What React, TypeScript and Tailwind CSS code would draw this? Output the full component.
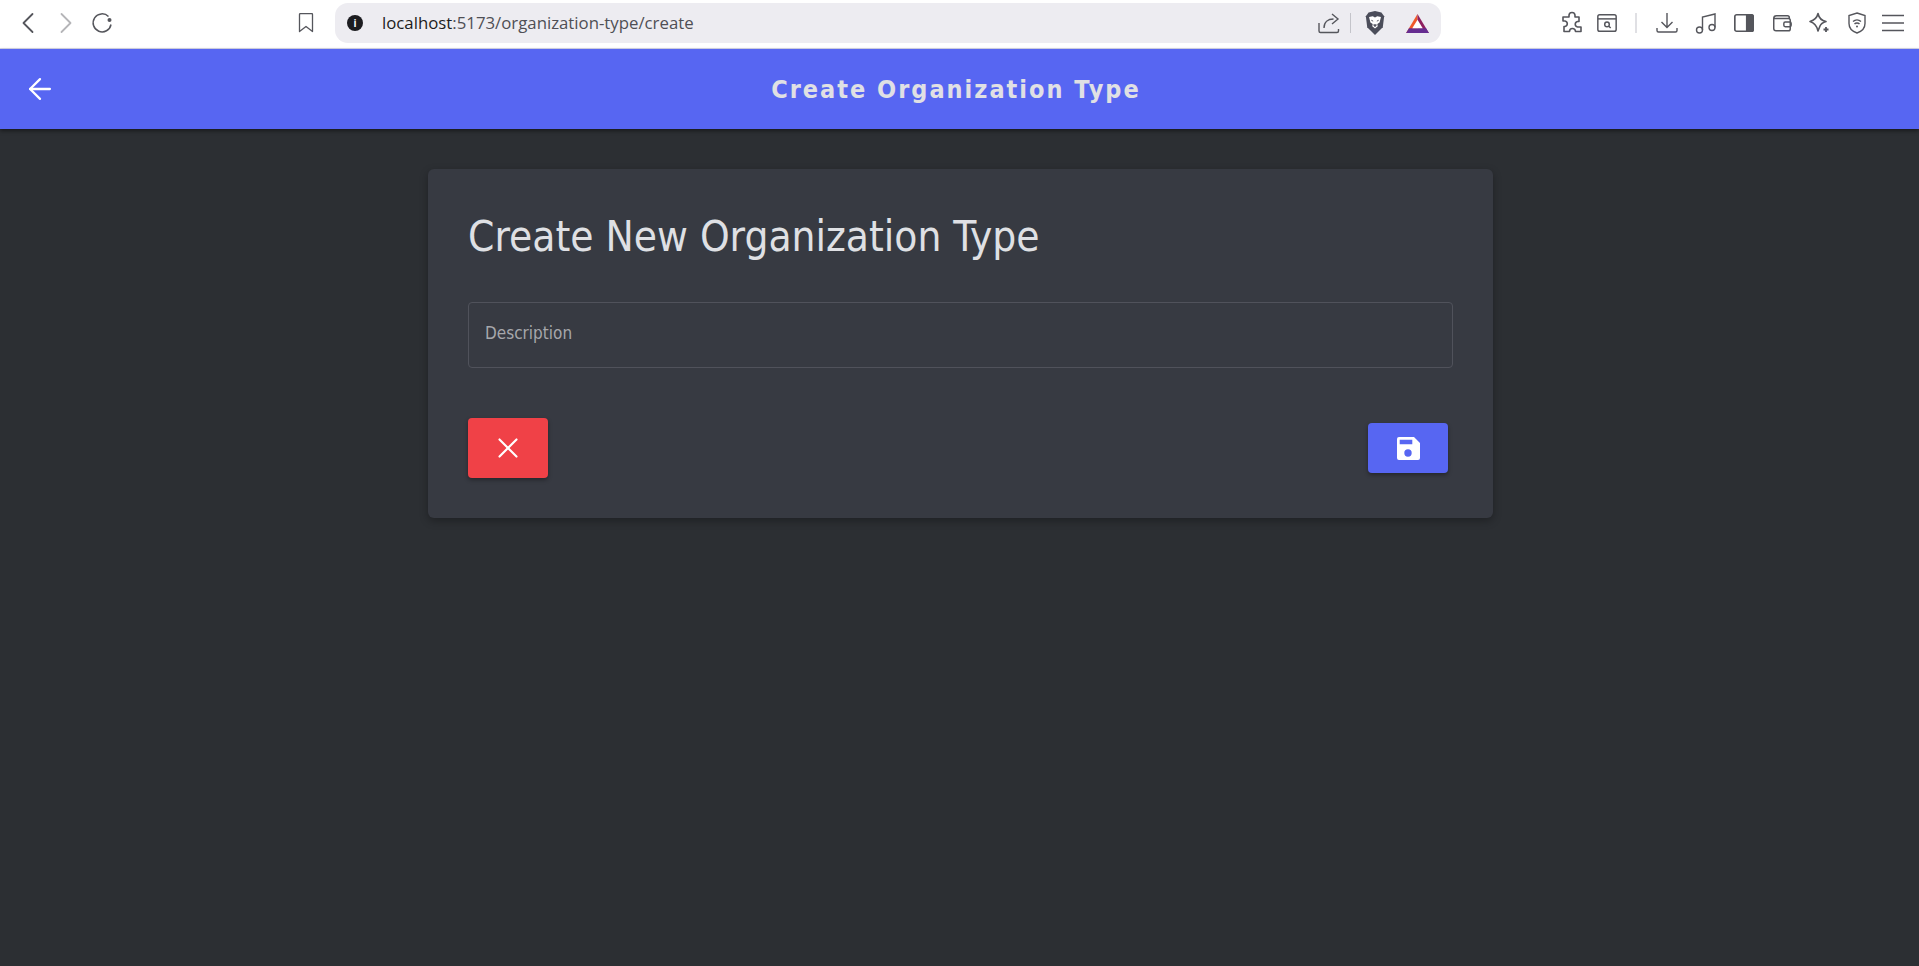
import { X, ChevronLeft, ChevronRight, ArrowLeft } from "lucide-react";

function ChromeBar() {
  return (
    <div className="h-[49px] pb-[2px] bg-white border-b border-[#d5d6e8] flex items-center font-['Open_Sans',sans-serif]">
      <div className="w-[335px] flex items-center shrink-0 text-[#55565c]">
        <ChevronLeft className="w-[36px] h-[36px] ml-[10px]" strokeWidth={1.2} />
        <ChevronRight className="w-[36px] h-[36px] ml-[2px] text-[#b5b5b8]" strokeWidth={1.2} />
        <svg viewBox="0 0 24 24" className="w-[24px] h-[24px] ml-[6px]" fill="none" stroke="#55565c" strokeWidth="1.5">
          <path d="M18.500 5.500A9 9 0 1 0 21 13.500" />
          <circle cx="19.500" cy="9" r="2" fill="#55565c" stroke="none" />
        </svg>
        <svg viewBox="0 0 16 20" className="w-[16px] h-[20px] ml-[184px]" fill="none" stroke="#55565c" strokeWidth="1.3">
          <path d="M1.500 1.500a1 1 0 0 1 1-1h11a1 1 0 0 1 1 1v17L8 13.500 1.500 18.500z" strokeLinejoin="round" />
        </svg>
      </div>
      <div className="w-[1106px] h-[40px] rounded-[13px] bg-[#edecf1] flex items-center shrink-0">
        <div className="w-[16px] h-[16px] ml-[12px] rounded-full bg-[#1c1c20] flex items-center justify-center text-white text-[10px] font-bold leading-none">i</div>
        <div className="ml-[19px] text-[16.800px] text-[#4f4f55] whitespace-nowrap">
          <span className="text-[#1c1c20]">localhost</span>:5173/organization-type/create
        </div>
        <div className="flex-1" />
        <svg viewBox="0 0 24 24" className="w-[24px] h-[24px]" fill="none" stroke="#55565c" strokeWidth="1.4">
          <path d="M2 12v8a1.500 1.500 0 0 0 1.500 1.500H20a1.500 1.500 0 0 0 1.500-1.500v-2M7 17c0-6 4-9 9.500-9M15 3l6 5-6 5" />
        </svg>
        <div className="w-px h-[20px] bg-[#c4c4ca] ml-[9px]" />
        <svg viewBox="0 0 24 28" className="w-[22px] h-[26px] ml-[13px]">
          <path d="M12 1l7 1.500 3 4-1.500 12L12 27l-8.500-8.500L2 6.500l3-4z" fill="#4b4d5a" />
          <path d="M5.500 7.500l4-1L12 8l2.500-1.500 4 1-1.500 6-2.500 1.500.5 2.500-3 2.500-3-2.500.5-2.500L7 13.500z" fill="#fff" />
          <path d="M8 11l2 1M16 11l-2 1M10.500 16h3L12 18z" stroke="#4b4d5a" strokeWidth="1" fill="#4b4d5a" />
        </svg>
        <svg viewBox="0 0 24 20" className="w-[23px] h-[19px] ml-[20px] mr-[12px]">
          <path d="M12 0L0 20h12z" fill="#f1582a" />
          <path d="M12 0l12 20H12z" fill="#8e1f5f" />
          <path d="M3 15h18l3 5H0z" fill="#662d91" />
          <path d="M12 6l-5.500 9h11z" fill="#fff" />
        </svg>
      </div>
      <div className="flex-1 flex items-center text-[#55565c] pl-[119px]">
        <svg viewBox="0 0 24 24" className="w-[24px] h-[24px]" fill="none" stroke="#55565c" strokeWidth="1.6">
          <path d="M9 4.500a3 3 0 0 1 6 0V6h4v4.500h-1.500a2.800 2.800 0 0 0 0 5.500H21v4.500h-5.500a3 3 0 0 0-6 0H4v-5h1a2.800 2.800 0 0 0 0-5.500H3V6h6z" strokeLinejoin="round" />
        </svg>
        <svg viewBox="0 0 24 24" className="w-[22px] h-[22px] ml-[12px]" fill="none" stroke="#55565c" strokeWidth="1.6">
          <rect x="2" y="3" width="20" height="18" rx="2" />
          <path d="M2 7.500h20" />
          <circle cx="12" cy="13.500" r="2.500" />
          <path d="M14 15.500l2 2" />
        </svg>
        <div className="w-[2px] h-[20px] bg-[#e0e0e4] ml-[17px]" />
        <svg viewBox="0 0 24 24" className="w-[24px] h-[24px] ml-[18px]" fill="none" stroke="#55565c" strokeWidth="1.4">
          <path d="M12 2v14M6.500 11l5.500 5.500 5.500-5.500M2 17v2.500a1.500 1.500 0 0 0 1.500 1.500h17a1.500 1.500 0 0 0 1.500-1.500V17" />
        </svg>
        <svg viewBox="0 0 24 24" className="w-[24px] h-[24px] ml-[15px]" fill="none" stroke="#55565c" strokeWidth="1.4">
          <circle cx="5.500" cy="19" r="3" />
          <circle cx="18" cy="16.500" r="3" />
          <path d="M8.500 19V6L21 3v13.500" />
        </svg>
        <svg viewBox="0 0 24 24" className="w-[22px] h-[22px] ml-[15px]" fill="none" stroke="#55565c" strokeWidth="1.8">
          <rect x="2" y="3" width="20" height="18" rx="2" />
          <path d="M15 3h5a2 2 0 0 1 2 2v14a2 2 0 0 1-2 2h-5z" fill="#55565c" />
        </svg>
        <svg viewBox="0 0 24 24" className="w-[22px] h-[22px] ml-[16px]" fill="none" stroke="#55565c" strokeWidth="1.6">
          <path d="M3 7a3 3 0 0 1 3-3h12a2 2 0 0 1 2 2v1M3 7v11a2.500 2.500 0 0 0 2.500 2.500H19a2 2 0 0 0 2-2V9a2 2 0 0 0-2-2z" />
          <rect x="14" y="11" width="8" height="5" rx="1.500" />
        </svg>
        <svg viewBox="0 0 24 24" className="w-[24px] h-[24px] ml-[14px]" fill="none" stroke="#55565c" strokeWidth="1.6">
          <path d="M11 2.500c1 5 3 7 8 8-3 1-5 2-6 4.500l-2 5c-1-5-3-8-8-9.500 5-1.500 7-3.500 8-8z" strokeLinejoin="round" />
          <path d="M19 16v5M16.500 18.500h5" strokeWidth="1.800" />
        </svg>
        <svg viewBox="0 0 24 24" className="w-[24px] h-[24px] ml-[14px]" fill="none" stroke="#55565c" strokeWidth="1.4">
          <path d="M12 2l8 2.500v8c0 4.500-3.500 8-8 9.500-4.500-1.500-8-5-8-9.500v-8z" />
          <path d="M8 10.500a6 6 0 0 1 8 0M9.500 13a3.500 3.500 0 0 1 5 0" />
          <circle cx="12" cy="15.500" r="1" fill="#55565c" stroke="none" />
        </svg>
        <svg viewBox="0 0 22 18" className="w-[22px] h-[18px] ml-[13px]" fill="none" stroke="#55565c" strokeWidth="1.500">
          <path d="M0 1.500h22M0 9h22M0 16.500h22" />
        </svg>
      </div>
    </div>
  );
}

export default function App() {
  return (
    <div className="w-full min-h-[966px] bg-[#2c2f33] flex flex-col">
      <ChromeBar />
      <header className="h-[80px] bg-[#5766f2] flex items-center shadow-[0_2px_4px_rgba(0,0,0,0.45)] shrink-0">
        <ArrowLeft className="w-[34px] h-[34px] ml-[23px] text-white" strokeWidth={1.6} />
        <h1 className="flex-1 text-center pr-[64px] pt-[2px] text-[25px] font-bold tracking-[2px] text-[#e0e0e4] font-['DejaVu_Sans_Condensed','DejaVu_Sans',sans-serif]">
          Create Organization Type
        </h1>
      </header>
      <main className="flex justify-center pt-[40px] pl-[2px]">
        <div className="w-[1065px] h-[349px] bg-[#373a42] rounded-[6px] p-[40px] shadow-[0_3px_8px_rgba(0,0,0,0.3)]">
          <h2 className="text-[42px] leading-[56px] text-[#dfe0e4] font-['DejaVu_Sans_Condensed','DejaVu_Sans',sans-serif]">
            Create New Organization Type
          </h2>
          <div className="mt-[37px] h-[66px] border border-[#50525b] rounded-[4px] flex items-center px-[16px] pb-[2px]">
            <span className="text-[17px] text-[#a6a7ab] font-['DejaVu_Sans_Condensed','DejaVu_Sans',sans-serif]">Description</span>
          </div>
          <div className="mt-[50px] flex items-center justify-between">
            <button className="w-[80px] h-[60px] rounded-[4px] bg-[#f04147] flex items-center justify-center shadow-[0_2px_4px_rgba(0,0,0,0.35)]">
              <X className="w-[34px] h-[34px] text-white" strokeWidth={1.500} />
            </button>
            <button className="w-[80px] h-[50px] mr-[5px] rounded-[4px] bg-[#5766f2] flex items-center justify-center shadow-[0_2px_4px_rgba(0,0,0,0.35)]">
              <svg viewBox="0 0 23 23" className="w-[23px] h-[23px]" fill="#fff" fillRule="evenodd">
                <path d="M2 0H17L23 6V21a2 2 0 0 1-2 2H2a2 2 0 0 1-2-2V2a2 2 0 0 1 2-2zM2.700 2.700v4.600h12.600V2.700zM11 12.300a3.700 3.700 0 1 0 0 7.400 3.700 3.700 0 0 0 0-7.400z" />
              </svg>
            </button>
          </div>
        </div>
      </main>
    </div>
  );
}
